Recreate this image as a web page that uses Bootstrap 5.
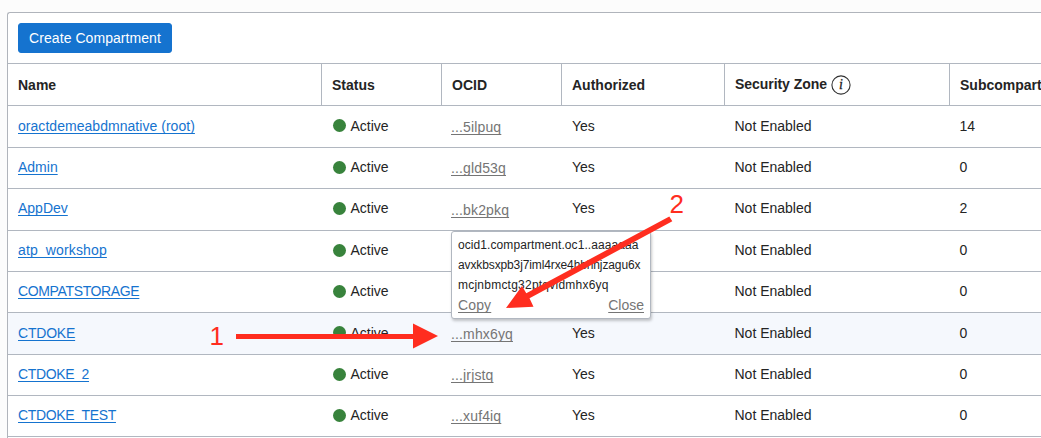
<!DOCTYPE html>
<html lang="en">
<head>
<meta charset="utf-8">
<meta name="viewport" content="width=device-width, initial-scale=1">
<title>Compartments</title>
<link rel="stylesheet" href="https://cdn.jsdelivr.net/npm/bootstrap@5.3.0/dist/css/bootstrap.min.css">
<style>
  html, body { height: 100%; }
  body { background: #fcfcfc; color: #242424; font: 14px/20px "Liberation Sans", Arial, sans-serif; overflow: hidden; }
  .panel { margin: 12px 0 0 7px; height: 426px; border: 1px solid #b0b4bb; border-width: 1px 0 0 1px; border-radius: 3px 0 0 0; background: #fff; overflow: hidden; }
  .toolbar { height: 51px; padding: 10px; border-bottom: 1px solid #b1b7c0; }
  .btn-create { --bs-btn-bg: #1573cf; --bs-btn-border-color: #1573cf; --bs-btn-color: #fff; --bs-btn-border-radius: 3px; --bs-btn-padding-y: 0; --bs-btn-padding-x: 10px; --bs-btn-font-size: 14px; --bs-btn-line-height: 28px; width: 154px; letter-spacing: .06px; white-space: nowrap; }
  .grid-table { table-layout: fixed; border-collapse: separate; border-spacing: 0; width: 1098px; --bs-table-bg: transparent; color: inherit; }
  .grid-table > :not(caption) > * > * { padding: 9px 9px 0 10px; border: 0; border-bottom: 1px solid #b1b7c0; color: inherit; vertical-align: top; white-space: nowrap; background: none; box-shadow: none; }
  .grid-table thead th { height: 42px; padding-top: 11px; border-right: 1px solid #b1b7c0; font-weight: 700; }
  .grid-table tbody tr { height: 41px; }
  .grid-table tbody tr.tall { height: 42px; }
  .grid-table tbody tr.low td { padding-top: 10px; }
  .grid-table tbody tr.current td { background: #f5f8fd; }
  .grid-table td:nth-child(n+5) { padding-left: 9.5px; }
  .grid-table a { color: #1573cf; text-underline-offset: 1.5px; text-decoration-thickness: 1px; text-decoration-skip-ink: none; }
  .grid-table a.ocid { display: inline-block; margin: 1px 0 0 -1px; letter-spacing: .14px; }
  .grid-table tr.tall:not(.low) a.ocid { margin-top: 2px; }
  .grid-table a.ocid, .id-pop a { color: #757575; }
  .zone { letter-spacing: -.05px; margin-top: -1px; }
  .info-icon { margin-left: 4px; }
  .snug { letter-spacing: -.36px; }
  .snug-sm { letter-spacing: -.2px; }
  .airy { letter-spacing: .14px; }
  .airy-sm { letter-spacing: .04px; }
  .dot { width: 13px; height: 13px; border-radius: 50%; background: #38833c; margin: 4px 5px 0 .5px; }
  .low .dot { margin-top: 3px; }
  .id-pop { position: absolute; left: 451px; top: 231px; width: 200px; height: 88px; padding: 3px 6px 0; background: #fff; border: 1px solid #b1b7c0; border-radius: 3px; box-shadow: 1px 2px 3px rgba(0,0,0,.22); font-size: 12px; white-space: nowrap; }
  .id-pop a { font-size: 14px; text-decoration-skip-ink: none; text-decoration-thickness: 1px; text-underline-offset: 1.5px; }
  .l1 { letter-spacing: .08px; }
  .l2 { letter-spacing: -.12px; }
  .l3 { letter-spacing: .23px; }
  .notes { position: absolute; left: 0; top: 0; pointer-events: none; }
</style>
</head>
<body>
<main class="panel">
  <div class="toolbar"><button class="btn btn-create" type="button">Create Compartment</button></div>
  <table class="table grid-table mb-0">
    <colgroup><col style="width:314px"><col style="width:120px"><col style="width:120px"><col style="width:163px"><col style="width:225px"><col></colgroup>
    <thead><tr>
      <th>Name</th><th>Status</th><th>OCID</th><th>Authorized</th>
      <th><div class="d-flex"><span class="zone">Security Zone</span>
        <svg class="info-icon" width="20" height="20" viewBox="0 0 20 20"><circle cx="10" cy="10" r="9.1" fill="none" stroke="#333" stroke-width="1.1"/><text x="8" y="14.3" font-family="Liberation Serif, serif" font-size="14" font-style="italic" font-weight="400" fill="#242424" stroke="#242424" stroke-width=".3">i</text></svg></div></th>
      <th>Subcompart</th>
    </tr></thead>
    <tbody>
      <tr class="tall low"><td><a class="airy-sm" href="#">oractdemeabdmnative (root)</a></td><td><div class="d-flex"><span class="dot"></span>Active</div></td><td><a class="ocid" href="#">...5ilpuq</a></td><td>Yes</td><td>Not Enabled</td><td>14</td></tr>
      <tr><td><a href="#">Admin</a></td><td><div class="d-flex"><span class="dot"></span>Active</div></td><td><a class="ocid" href="#">...gld53q</a></td><td>Yes</td><td>Not Enabled</td><td>0</td></tr>
      <tr class="tall"><td><a href="#">AppDev</a></td><td><div class="d-flex"><span class="dot"></span>Active</div></td><td><a class="ocid" href="#">...bk2pkq</a></td><td>Yes</td><td>Not Enabled</td><td>2</td></tr>
      <tr><td><a class="airy" href="#">atp_workshop</a></td><td><div class="d-flex"><span class="dot"></span>Active</div></td><td></td><td></td><td>Not Enabled</td><td>0</td></tr>
      <tr><td><a class="snug" href="#">COMPATSTORAGE</a></td><td><div class="d-flex"><span class="dot"></span>Active</div></td><td></td><td></td><td>Not Enabled</td><td>0</td></tr>
      <tr class="tall low current"><td><a class="snug-sm" href="#">CTDOKE</a></td><td><div class="d-flex"><span class="dot"></span>Active</div></td><td><a class="ocid" href="#">...mhx6yq</a></td><td>Yes</td><td>Not Enabled</td><td>0</td></tr>
      <tr><td><a class="snug" href="#">CTDOKE_2</a></td><td><div class="d-flex"><span class="dot"></span>Active</div></td><td><a class="ocid" href="#">...jrjstq</a></td><td>Yes</td><td>Not Enabled</td><td>0</td></tr>
      <tr><td><a class="snug" href="#">CTDOKE_TEST</a></td><td><div class="d-flex"><span class="dot"></span>Active</div></td><td><a class="ocid" href="#">...xuf4iq</a></td><td>Yes</td><td>Not Enabled</td><td>0</td></tr>
    </tbody>
  </table>
</main>

<div class="id-pop">
  <div class="l1">ocid1.compartment.oc1..aaaaaaa</div>
  <div class="l2">avxkbsxpb3j7iml4rxe4hbhnjzagu6x</div>
  <div class="l3">mcjnbmctg32ptqvldmhx6yq</div>
  <div class="d-flex justify-content-between"><a class="airy" href="#">Copy</a><a href="#">Close</a></div>
</div>

<!-- step arrows -->
<svg class="notes" width="1041" height="438" fill="#ff2d1f" font-family="Liberation Sans, Arial, sans-serif" font-size="26">
  <text x="209.5" y="345">1</text>
  <path d="M236 334H413V323.5L438 336L413 348.5V339H236Z"/>
  <text x="669.5" y="213">2</text>
  <path d="M669.3 216.4L672.3 221.3L529.5 298.3L533.5 306.8L506 308L522 286L526.3 293.3Z"/>
</svg>
<script src="https://cdn.jsdelivr.net/npm/bootstrap@5.3.0/dist/js/bootstrap.bundle.min.js"></script>
</body>
</html>
